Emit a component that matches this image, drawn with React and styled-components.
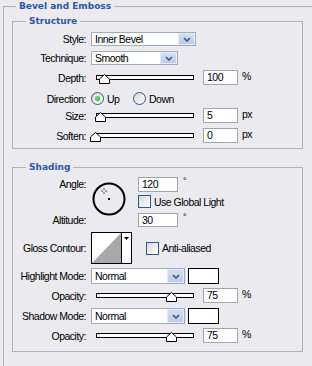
import React from 'react'
import styled, { createGlobalStyle } from 'styled-components'

const GlobalStyle = createGlobalStyle`
  html, body {
    margin: 0;
    padding: 0;
    background: #ebeaee;
  }
  body {
    font-family: "Liberation Sans", Arial, sans-serif;
    font-size: 10.5px;
    letter-spacing: -0.5px;
    color: #000;
  }
`

const Page = styled.div`
  width: 312px;
  height: 366px;
  overflow: hidden;
  background: #ebeaee;
`

const Group = styled.fieldset`
  box-sizing: border-box;
  margin: ${p => p.$mt}px 0 0 ${p => p.$ml}px;
  padding: 0 0 ${p => p.$pb || 0}px 0;
  width: ${p => p.$w}px;
  min-height: ${p => p.$minH || 0}px;
  border: 1px solid #b1afb8;
`

const Legend = styled.legend`
  margin-left: ${p => p.$ml}px;
  padding: 0 3px;
  line-height: 13px;
  font-family: "DejaVu Sans", Verdana, sans-serif;
  font-weight: bold;
  font-size: 9px;
  letter-spacing: 0;
  color: #2c58a8;
`

const Row = styled.div`
  display: flex;
  align-items: center;
  height: ${p => p.$h}px;
  margin-top: ${p => p.$mt}px;
  white-space: nowrap;
`

const Label = styled.div`
  flex: none;
  width: 73px;
  margin-right: 5px;
  text-align: right;
`

const SelectBox = styled.div`
  box-sizing: border-box;
  display: flex;
  width: ${p => p.$w}px;
  height: ${p => p.$h}px;
  border: 1px solid #a4abb6;
  background: #fff;
`

const SelectText = styled.span`
  flex: 1;
  display: flex;
  align-items: center;
  padding-left: 3px;
`

const DropButton = styled.span`
  box-sizing: border-box;
  width: 17px;
  display: flex;
  align-items: center;
  justify-content: center;
  border: 1px solid #e4ecf8;
  background: linear-gradient(#d3e0f3, #b9cce9);
`

const NumBox = styled.div`
  box-sizing: border-box;
  flex: none;
  width: ${p => p.$w || 35}px;
  height: ${p => p.$h || 15}px;
  line-height: ${p => (p.$h || 15) - 2}px;
  padding-left: 3px;
  border: 1px solid #a2a5ab;
  background: #fff;
`

const Unit = styled.span`
  margin-left: 4px;
  align-self: flex-start;
  line-height: 13px;
`

const Degree = styled.span`
  margin-left: 5px;
  align-self: flex-start;
  font-size: 9px;
  line-height: 9px;
`

const Track = styled.div`
  position: relative;
  box-sizing: border-box;
  flex: none;
  width: 98px;
  height: 5px;
  margin: 0 9px 0 5px;
  border: 1px solid #000;
  background: #fff;
`

const Thumb = styled.svg`
  position: absolute;
  top: -2px;
  display: block;
`

const Option = styled.label`
  display: flex;
  align-items: center;
  width: ${p => (p.$w ? `${p.$w}px` : 'auto')};
`

const Radio = styled.span`
  box-sizing: border-box;
  width: 13px;
  height: 13px;
  margin-right: 3px;
  border-radius: 50%;
  border: 1px solid #2b5a8c;
  background: linear-gradient(135deg, #d8d8d3, #ffffff);
  display: flex;
  align-items: center;
  justify-content: center;

  &::after {
    content: '';
    width: 5px;
    height: 5px;
    border-radius: 50%;
    background: ${p => (p.$on ? 'radial-gradient(circle at 35% 35%, #7ce27a, #1f9d1f)' : 'transparent')};
  }
`

const Check = styled.span`
  box-sizing: border-box;
  flex: none;
  width: 13px;
  height: 13px;
  margin-left: ${p => p.$ml || 0}px;
  border: 1px solid #2b5a8c;
  background: linear-gradient(135deg, #d8d8d3, #ffffff);
`

const CheckText = styled.span`
  margin-left: 3px;
`

const Swatch = styled.div`
  box-sizing: border-box;
  width: 31px;
  height: 16px;
  margin-left: 3px;
  border: 1px solid #000;
  background: #fff;
`

const DialGrid = styled.div`
  display: grid;
  grid-template-columns: 73px 42px auto;
  grid-template-rows: 18px 18px 14px;
  column-gap: 5px;
  margin-top: 3px;
  white-space: nowrap;
`

const GridLabel = styled.div`
  grid-column: 1;
  grid-row: ${p => p.$row};
  text-align: right;
  line-height: 15px;
`

const Dial = styled.svg`
  grid-column: 2;
  grid-row: 1 / span 3;
  margin: 5px 0 0 1px;
  display: block;
`

const Field = styled.div`
  grid-column: 3;
  grid-row: ${p => p.$row};
  display: flex;
  align-items: ${p => (p.$row === 2 ? 'center' : 'flex-start')};
  height: ${p => (p.$row === 2 ? 13 : 15)}px;
`

const Contour = styled.div`
  box-sizing: border-box;
  display: flex;
  width: 41px;
  height: 32px;
  border: 1px solid #000;
  background: #fff;
`

const ContourArrow = styled.div`
  width: 9px;
  border-left: 1px solid #000;
  display: flex;
  justify-content: center;
  padding-top: 4px;
`

function Chevron() {
  return (
    <svg width="8" height="5" viewBox="0 0 8 5">
      <path d="M1 1l3 3 3-3" fill="none" stroke="#4a5c7e" strokeWidth="1.7" />
    </svg>
  )
}

function Select({ width, height, value }) {
  return (
    <SelectBox $w={width} $h={height}>
      <SelectText>{value}</SelectText>
      <DropButton>
        <Chevron />
      </DropButton>
    </SelectBox>
  )
}

function SliderRow({ mt, label, value, unit, thumb }) {
  return (
    <Row $mt={mt} $h={15}>
      <Label>{label}</Label>
      <Track>
        <Thumb width="11" height="10" viewBox="0 0 11 10" style={{ left: thumb - 6 }}>
          <path d="M5.5 0.5L10.5 5V9.5H0.5V5Z" fill="#fff" stroke="#000" />
        </Thumb>
      </Track>
      <NumBox>{value}</NumBox>
      <Unit>{unit}</Unit>
    </Row>
  )
}

export default function App() {
  return (
    <Page>
      <GlobalStyle />
      <Group $ml={3} $mt={0} $w={340} $minH={420}>
        <Legend $ml={12}>Bevel and Emboss</Legend>

        <Group $ml={8} $mt={2} $w={291} $pb={5}>
          <Legend $ml={13}>Structure</Legend>
          <Row $mt={4} $h={14}>
            <Label>Style:</Label>
            <Select width={105} height={14} value="Inner Bevel" />
          </Row>
          <Row $mt={5} $h={14}>
            <Label>Technique:</Label>
            <Select width={87} height={14} value="Smooth" />
          </Row>
          <SliderRow mt={5} label="Depth:" value="100" unit="%" thumb={8} />
          <Row $mt={7} $h={13}>
            <Label>Direction:</Label>
            <Option $w={42}>
              <Radio $on />
              Up
            </Option>
            <Option>
              <Radio />
              Down
            </Option>
          </Row>
          <SliderRow mt={3} label="Size:" value="5" unit="px" thumb={4} />
          <SliderRow mt={5} label="Soften:" value="0" unit="px" thumb={-1} />
        </Group>

        <Group $ml={8} $mt={12} $w={291} $pb={8}>
          <Legend $ml={13}>Shading</Legend>
          <DialGrid>
            <GridLabel $row={1}>Angle:</GridLabel>
            <Dial width="34" height="34" viewBox="0 0 34 34">
              <circle cx="17" cy="17" r="15.5" fill="none" stroke="#000" strokeWidth="2" />
              <rect x="16" y="16" width="2" height="2" fill="#000" />
              <path d="M12 6v2M12 10v2M9 9h2M13 9h2" stroke="#555" strokeWidth="1" />
            </Dial>
            <Field $row={1}>
              <NumBox $w={40}>120</NumBox>
              <Degree>°</Degree>
            </Field>
            <Field $row={2}>
              <Check />
              <CheckText>Use Global Light</CheckText>
            </Field>
            <GridLabel $row={3}>Altitude:</GridLabel>
            <Field $row={3}>
              <NumBox $w={40} $h={14}>30</NumBox>
              <Degree>°</Degree>
            </Field>
          </DialGrid>

          <Row $mt={5} $h={32}>
            <Label>Gloss Contour:</Label>
            <Contour>
              <svg width="29" height="30" viewBox="0 0 29 30">
                <path d="M0 30L29 0V30Z" fill="#a9a9ab" />
              </svg>
              <ContourArrow>
                <svg width="5" height="3" viewBox="0 0 5 3">
                  <path d="M0 0H5L2.5 3Z" fill="#000" />
                </svg>
              </ContourArrow>
            </Contour>
            <Check $ml={14} />
            <CheckText>Anti-aliased</CheckText>
          </Row>
          <Row $mt={4} $h={16}>
            <Label>Highlight Mode:</Label>
            <Select width={94} height={16} value="Normal" />
            <Swatch />
          </Row>
          <SliderRow mt={4} label="Opacity:" value="75" unit="%" thumb={75} />
          <Row $mt={5} $h={16}>
            <Label>Shadow Mode:</Label>
            <Select width={94} height={16} value="Normal" />
            <Swatch />
          </Row>
          <SliderRow mt={4} label="Opacity:" value="75" unit="%" thumb={75} />
        </Group>
      </Group>
    </Page>
  )
}
